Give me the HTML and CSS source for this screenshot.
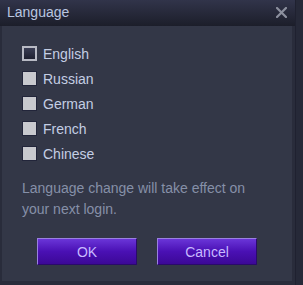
FILE: index.html
```html
<!DOCTYPE html>
<html lang="en">
<head>
    <meta charset="UTF-8">
    <title>Language</title>
    <link rel="stylesheet" href="styles.css">
</head>
<body>
    <div class="dialog">
        <div class="title-bar">
            <span class="title">Language</span>
            <span class="close">
                <svg width="11" height="11" viewBox="0 0 11 11">
                    <path d="M1 1L10 10M10 1L1 10" stroke="#8c909e" stroke-width="2.2" stroke-linecap="square"/>
                </svg>
            </span>
        </div>
        <div class="panel">
            <ul class="lang-list">
                <li class="lang"><span class="box checked"></span>English</li>
                <li class="lang"><span class="box"></span>Russian</li>
                <li class="lang"><span class="box"></span>German</li>
                <li class="lang"><span class="box"></span>French</li>
                <li class="lang"><span class="box"></span>Chinese</li>
            </ul>
            <p class="note">Language change will take effect on your next login.</p>
            <div class="buttons">
                <button class="btn">OK</button>
                <button class="btn">Cancel</button>
            </div>
        </div>
    </div>
</body>
</html>
```

FILE: styles.css
```css
* {
    margin: 0;
    padding: 0;
    box-sizing: border-box;
}

body {
    font-family: 'Liberation Sans', Arial, sans-serif;
    background: #262938;
    width: 303px;
    height: 285px;
    overflow: hidden;
}

.dialog {
    width: 296px;
    height: 285px;
    background: #292c3b;
    border-right: 1px solid #1f2130;
}

.title-bar {
    height: 26px;
    display: flex;
    align-items: center;
    justify-content: space-between;
    padding: 0 8px 2px 7px;
    background: linear-gradient(#31344a, #1c1e2a);
}

.title {
    color: #b9c6e0;
    font-size: 14px;
}

.close {
    display: flex;
    margin-top: 1px;
}

.panel {
    margin-left: 2px;
    width: 290px;
    height: 255px;
    background: #333747;
    padding: 15px 20px 0 20px;
}

.lang-list {
    list-style: none;
}

.lang {
    height: 25px;
    display: flex;
    align-items: center;
    gap: 6px;
    color: #c4cee4;
    font-size: 14px;
}

.box {
    width: 15px;
    height: 15px;
    background: #c8c9ce;
    border: 1px solid #22253a;
}

.box.checked {
    background: linear-gradient(#3a3d54, #1e2030);
    border: 2px solid #b8bac4;
}

.note {
    margin-top: 12px;
    color: #8690a8;
    font-size: 14px;
    line-height: 21px;
    padding-right: 10px;
}

.buttons {
    display: flex;
    gap: 20px;
    margin-top: 18px;
    padding-left: 15px;
}

.btn {
    width: 100px;
    height: 27px;
    font-family: inherit;
    font-size: 14px;
    color: #c7b9ff;
    background: linear-gradient(#6a35d8, #4a10b4 50%, #3c0896);
    border: 1px solid #2a0a6a;
    border-top-color: #9a80e0;
    border-left-color: #9a80e0;
}
```
